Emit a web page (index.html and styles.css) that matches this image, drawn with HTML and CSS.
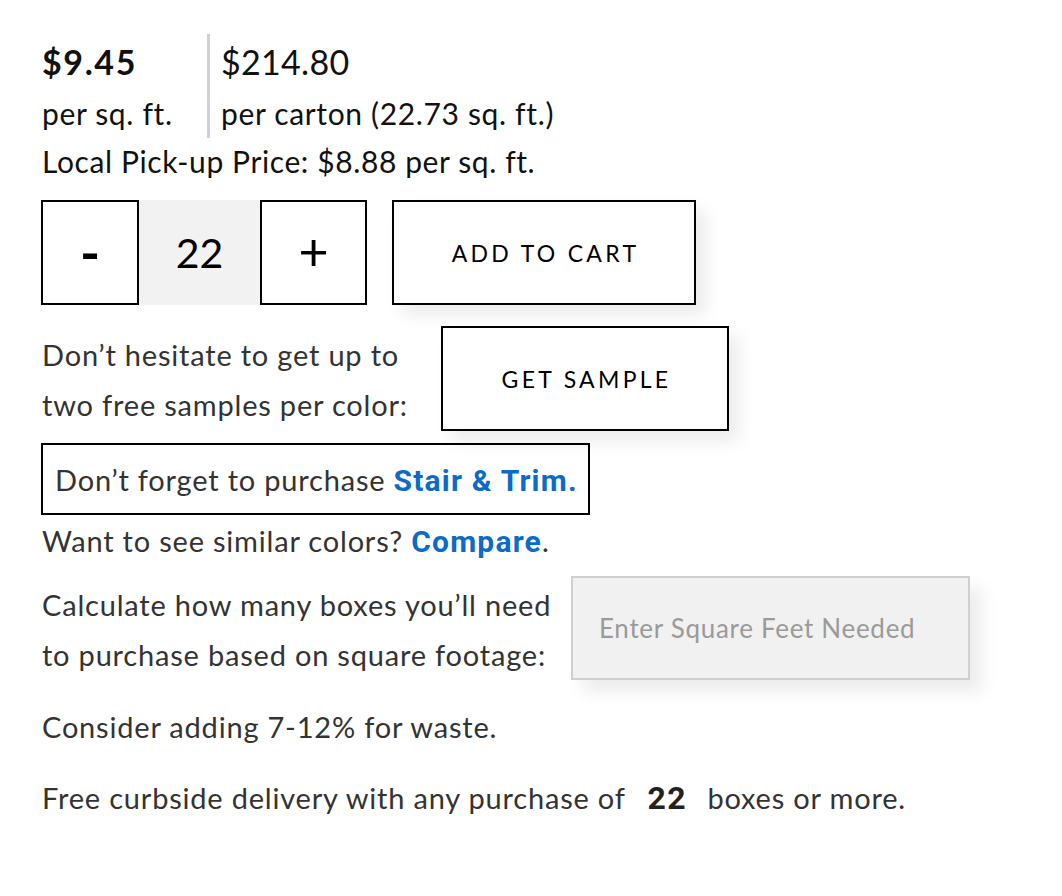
FILE: index.html
```html
<!DOCTYPE html>
<html>
<head>
<meta charset="utf-8">
<link rel="stylesheet" href="styles.css">
</head>
<body>
<div class="product">
  <div class="prices">
    <div class="price-col first">
      <div class="price bold">$9.45</div>
      <div class="unit">per sq. ft.</div>
    </div>
    <div class="price-col second">
      <div class="price">$214.80</div>
      <div class="unit">per carton (22.73 sq. ft.)</div>
    </div>
  </div>
  <div class="pickup">Local Pick-up Price: $8.88 per sq. ft.</div>

  <div class="cart-row">
    <div class="qty">
      <button class="qty-btn minus">-</button>
      <div class="qty-num">22</div>
      <button class="qty-btn plus">+</button>
    </div>
    <button class="action-btn add">ADD TO CART</button>
  </div>

  <div class="sample-row">
    <p class="sample-text">Don’t hesitate to get up to<br>two free samples per color:</p>
    <button class="action-btn sample">GET SAMPLE</button>
  </div>

  <div class="stair-box">Don’t forget to purchase <a class="link" href="#">Stair &amp; Trim.</a></div>

  <p class="compare">Want to see similar colors? <a class="link" href="#">Compare</a>.</p>

  <div class="calc-row">
    <p class="calc-text">Calculate how many boxes you’ll need<br>to purchase based on square footage:</p>
    <input class="calc-input" type="text" placeholder="Enter Square Feet Needed">
  </div>

  <p class="waste">Consider adding 7-12% for waste.</p>
  <p class="delivery">Free curbside delivery with any purchase of <b class="num">22</b> boxes or more.</p>
</div>
</body>
</html>
```

FILE: styles.css
```css
* { box-sizing: border-box; }
body {
  margin: 0;
  background: #fff;
  font-family: "Lato", "Liberation Sans", sans-serif;
  color: #111;
}
.product {
  padding: 34px 0 0 42px;
}
.prices {
  display: flex;
}
.price-col {
  display: flex;
  flex-direction: column;
}
.price-col.first {
  width: 168px;
  border-right: 3px solid #cdd0d4;
}
.price-col.second {
  padding-left: 11px;
}
.price {
  font-size: 34px;
  line-height: 52px;
  height: 54px;
  padding-top: 2px;
  letter-spacing: 0.3px;
}
.price.bold { font-weight: 700; letter-spacing: 1.6px; }
.unit {
  font-size: 30px;
  line-height: 50px;
  letter-spacing: 0.65px;
}
.pickup {
  font-size: 30px;
  line-height: 50px;
  letter-spacing: 0.6px;
  margin-top: -2px;
}
.cart-row {
  display: flex;
  gap: 25px;
  margin-top: 14px;
  margin-left: -1px;
}
.qty {
  display: flex;
  background: #f2f2f2;
}
button {
  font-family: inherit;
  cursor: pointer;
}
.qty-btn {
  height: 105px;
  border: 2px solid #000;
  background: #fff;
  color: #000;
  padding: 0;
  display: flex;
  align-items: center;
  justify-content: center;
}
.qty-btn.minus { width: 98px; font-size: 54px; font-weight: 700; padding-bottom: 2px; }
.qty-btn.plus { width: 107px; font-size: 52px; padding-bottom: 4px; }
.qty-num {
  width: 121px;
  display: flex;
  align-items: center;
  justify-content: center;
  font-size: 41px;
  color: #000;
}
.action-btn {
  border: 2px solid #000;
  background: #fff;
  color: #000;
  font-size: 23px;
  letter-spacing: 3.3px;
  box-shadow: 10px 10px 16px rgba(0,0,0,0.08);
  padding: 0 0 0 3px;
}
.add {
  width: 304px;
  height: 105px;
}
.sample-row {
  display: flex;
  align-items: flex-start;
  margin-top: 21px;
}
.sample-text, .calc-text {
  margin: 0;
  font-size: 29px;
  line-height: 50px;
  letter-spacing: 0.8px;
  color: #333;
}
.sample-text { width: 399px; padding-top: 4px; }
.sample {
  width: 288px;
  height: 105px;
}
.stair-box {
  display: inline-block;
  margin-top: 12px;
  margin-left: -1px;
  border: 2px solid #000;
  padding: 0 10px 0 12px;
  height: 72px;
  line-height: 70px;
  font-size: 29px;
  letter-spacing: 0.8px;
  color: #333;
}
.link {
  color: #0a6bc8;
  font-weight: 700;
  text-decoration: none;
  font-family: "Roboto", "Liberation Sans", sans-serif;
  font-size: 30px;
  letter-spacing: 1.2px;
}
.compare {
  margin: 1px 0 0;
  font-size: 29px;
  line-height: 50px;
  letter-spacing: 0.8px;
  color: #333;
}
.calc-row {
  display: flex;
  align-items: flex-start;
  margin-top: 9px;
}
.calc-text { width: 529px; padding-top: 4px; }
.calc-input {
  width: 399px;
  height: 104px;
  border: 2px solid #cfcfcf;
  background: #f1f1f1;
  font-family: inherit;
  font-size: 26px;
  letter-spacing: 0.7px;
  padding: 0 0 0 26px;
  color: #333;
  box-shadow: 12px 12px 16px rgba(0,0,0,0.08);
  outline: none;
}
.calc-input::placeholder { color: #9a9a9a; }
.waste {
  margin: 22px 0 0;
  font-size: 29px;
  line-height: 50px;
  letter-spacing: 0.8px;
  color: #333;
}
.delivery {
  margin: 21px 0 0;
  font-size: 29px;
  line-height: 50px;
  letter-spacing: 0.8px;
  color: #333;
}
.num {
  font-family: "Roboto", "Liberation Sans", sans-serif;
  font-weight: 700;
  font-size: 32px;
  letter-spacing: 1.5px;
  margin: 0 12px 0 14px;
  color: #222;
}
```
